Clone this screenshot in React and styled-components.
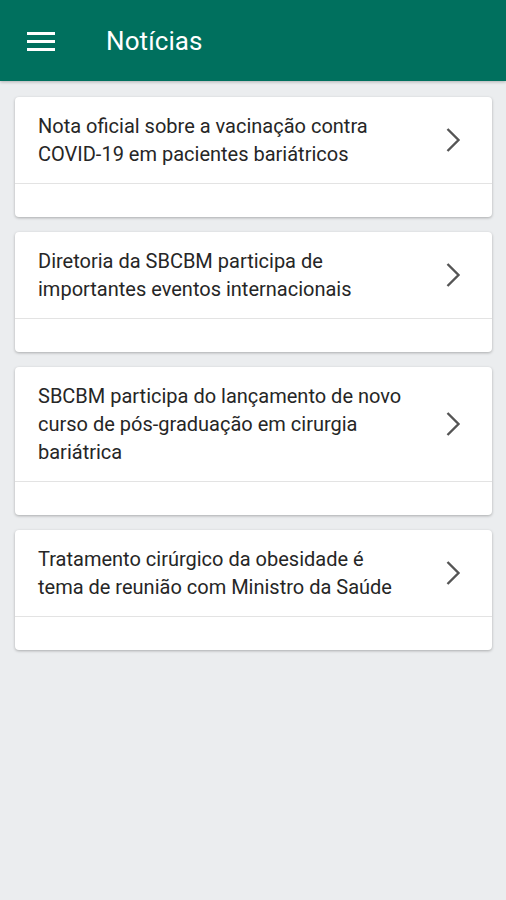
import React from "react";
import styled, { createGlobalStyle } from "styled-components";

const Global = createGlobalStyle`
  html, body { margin: 0; padding: 0; background: #ebedef; }
  body { font-family: Roboto, "Noto Sans", sans-serif; }
`;

const Page = styled.div`
  min-height: 900px;
  background: #ebedef;
`;

const Header = styled.header`
  height: 81px;
  background: #00705e;
  display: flex;
  align-items: center;
  padding-left: 27px;
  box-sizing: border-box;
  box-shadow: 0 1px 3px rgba(0,0,0,0.25);
`;

const Burger = styled.div`
  width: 28px;
  display: flex;
  flex-direction: column;
  gap: 5px;
  margin-top: 1px;
  span { display: block; height: 3px; background: #fff; }
`;

const Title = styled.h1`
  margin: 0 0 0 51px;
  color: #fff;
  font-size: 26px;
  font-weight: 400;
  letter-spacing: 0.1px;
`;

const List = styled.main`
  display: flex;
  flex-direction: column;
  gap: 15px;
  padding: 16px 14px 0 15px;
`;

const Card = styled.article`
  background: #fff;
  border-radius: 4px;
  box-shadow: 0 1px 3px rgba(0,0,0,0.28);
  overflow: hidden;
`;

const Top = styled.div`
  display: flex;
  align-items: center;
  padding: 15px 31px 15px 23px;
  border-bottom: 1px solid #e3e3e3;
`;

const Text = styled.p`
  flex: 1;
  margin: 0 38px 0 0;
  font-size: 20px;
  line-height: 28px;
  color: #262626;
`;

const Bottom = styled.div`
  height: 33px;
`;

const Chevron = () => (
  <svg width="16" height="26" viewBox="0 0 16 26" fill="none">
    <path d="M2.5 2 L13.5 13 L2.5 24" stroke="#555" strokeWidth="2.4" />
  </svg>
);

const items = [
  "Nota oficial sobre a vacinação contra COVID-19 em pacientes bariátricos",
  "Diretoria da SBCBM participa de importantes eventos internacionais",
  "SBCBM participa do lançamento de novo curso de pós-graduação em cirurgia bariátrica",
  "Tratamento cirúrgico da obesidade é tema de reunião com Ministro da Saúde",
];

export default function App() {
  return (
    <Page>
      <Global />
      <Header>
        <Burger><span /><span /><span /></Burger>
        <Title>Notícias</Title>
      </Header>
      <List>
        {items.map((t) => (
          <Card key={t}>
            <Top>
              <Text>{t}</Text>
              <Chevron />
            </Top>
            <Bottom />
          </Card>
        ))}
      </List>
    </Page>
  );
}
